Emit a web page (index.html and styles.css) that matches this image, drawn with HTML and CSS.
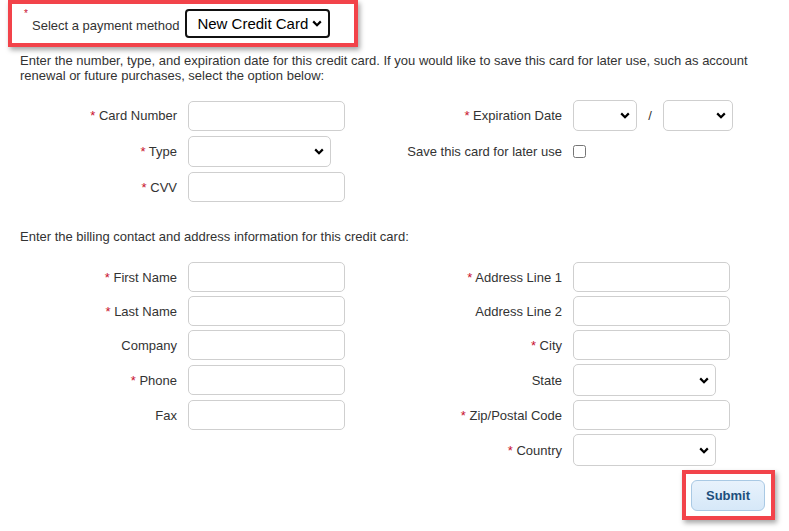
FILE: index.html
```html
<!DOCTYPE html>
<html>
<head>
<meta charset="utf-8">
<link rel="stylesheet" href="styles.css">
</head>
<body>
<div class="page">
  <div class="method-box">
    <span class="method-label"><sup class="req-sup">*</sup>Select a payment method</span>
    <select class="method-select"><option>New Credit Card</option></select>
  </div>

  <p class="intro">Enter the number, type, and expiration date for this credit card. If you would like to save this card for later use, such as account renewal or future purchases, select the option below:</p>

  <div class="form-grid card-grid">
    <label class="lbl"><span class="req">*</span> Card Number</label>
    <div class="fld"><input class="txt" type="text"></div>
    <label class="lbl"><span class="req">*</span> Expiration Date</label>
    <div class="fld exp">
      <select class="sel sel-month"></select>
      <span class="slash">/</span>
      <select class="sel sel-year"></select>
    </div>

    <label class="lbl"><span class="req">*</span> Type</label>
    <div class="fld"><select class="sel sel-mid"></select></div>
    <label class="lbl">Save this card for later use</label>
    <div class="fld"><input class="chk" type="checkbox"></div>

    <label class="lbl"><span class="req">*</span> CVV</label>
    <div class="fld"><input class="txt" type="text"></div>
    <div></div><div></div>
  </div>

  <p class="intro billing">Enter the billing contact and address information for this credit card:</p>

  <div class="form-grid bill-grid">
    <label class="lbl"><span class="req">*</span> First Name</label>
    <div class="fld"><input class="txt" type="text"></div>
    <label class="lbl"><span class="req">*</span> Address Line 1</label>
    <div class="fld"><input class="txt" type="text"></div>

    <label class="lbl"><span class="req">*</span> Last Name</label>
    <div class="fld"><input class="txt" type="text"></div>
    <label class="lbl">Address Line 2</label>
    <div class="fld"><input class="txt" type="text"></div>

    <label class="lbl">Company</label>
    <div class="fld"><input class="txt" type="text"></div>
    <label class="lbl"><span class="req">*</span> City</label>
    <div class="fld"><input class="txt" type="text"></div>

    <label class="lbl"><span class="req">*</span> Phone</label>
    <div class="fld"><input class="txt" type="text"></div>
    <label class="lbl">State</label>
    <div class="fld"><select class="sel sel-mid sel-tall"></select></div>

    <label class="lbl">Fax</label>
    <div class="fld"><input class="txt" type="text"></div>
    <label class="lbl"><span class="req">*</span> Zip/Postal Code</label>
    <div class="fld"><input class="txt" type="text"></div>

    <div></div><div></div>
    <label class="lbl"><span class="req">*</span> Country</label>
    <div class="fld"><select class="sel sel-mid sel-tall"></select></div>
  </div>

  <div class="submit-row">
    <div class="submit-box">
      <button class="submit" type="button">Submit</button>
    </div>
  </div>
</div>
</body>
</html>
```

FILE: styles.css
```css
* { box-sizing: border-box; }

html, body {
  margin: 0;
  padding: 0;
  background: #ffffff;
}

body {
  font-family: "Liberation Sans", Arial, sans-serif;
  font-size: 13px;
  color: #333333;
}

.page {
  width: 789px;
  height: 531px;
  overflow: hidden;
  padding: 0 20px 0 20px;
}

.method-box {
  margin-left: -12px;
  width: 350px;
  height: 47px;
  border: 4px solid #f2434a;
  box-shadow: 2px 3px 5px rgba(0, 0, 0, 0.35);
  display: flex;
  align-items: center;
  padding-left: 12px;
  padding-top: 1px;
}

.method-label {
  position: relative;
  padding-left: 8px;
  color: #333;
  margin-right: 6px;
  margin-top: 2px;
}

.req-sup {
  position: absolute;
  left: 0;
  top: -10px;
  color: #c8102e;
  font-size: 10px;
}

.method-select {
  width: 145px;
  height: 29px;
  border: 2px solid #111;
  border-radius: 4px;
  background: #fff url("data:image/svg+xml;utf8,<svg xmlns='http://www.w3.org/2000/svg' width='10' height='7' viewBox='0 0 10 7'><path d='M1.2 1.4 L5 5.2 L8.8 1.4' fill='none' stroke='%23000' stroke-width='2.2'/></svg>") no-repeat right 6px center;
  appearance: none;
  -webkit-appearance: none;
  font-family: "Liberation Sans", Arial, sans-serif;
  font-size: 15px;
  color: #000;
  padding: 0 0 0 10px;
  margin-top: -1px;
}

.intro {
  margin: 6px 0 0 0;
  line-height: 15px;
  color: #333;
}

.billing {
  margin-top: 27px;
}

.form-grid {
  display: grid;
  grid-template-columns: 168px 207px 178px auto;
  align-items: center;
}

.card-grid {
  margin-top: 17px;
  row-gap: 5px;
}

.bill-grid {
  margin-top: 18px;
  row-gap: 4px;
}

.lbl {
  text-align: right;
  color: #333;
  white-space: nowrap;
}

.card-grid .lbl:nth-child(4n+1),
.bill-grid .lbl:nth-child(4n+1) {
  padding-right: 11px;
}

.card-grid .lbl:nth-child(4n+3),
.bill-grid .lbl:nth-child(4n+3) {
  padding-right: 11px;
}

.req {
  color: #c8102e;
}

.fld {
  display: flex;
  align-items: center;
}

.txt {
  width: 157px;
  height: 30px;
  border: 1px solid #cfcfcf;
  border-radius: 5px;
  background: #fff;
  padding: 0 6px;
  font-family: "Liberation Sans", Arial, sans-serif;
  font-size: 13px;
}

.sel {
  height: 31px;
  border: 1px solid #cfcfcf;
  border-radius: 5px;
  background: #fff url("data:image/svg+xml;utf8,<svg xmlns='http://www.w3.org/2000/svg' width='10' height='7' viewBox='0 0 10 7'><path d='M1.2 1.4 L5 5.2 L8.8 1.4' fill='none' stroke='%23000' stroke-width='2.2'/></svg>") no-repeat right 6px center;
  appearance: none;
  -webkit-appearance: none;
  font-family: "Liberation Sans", Arial, sans-serif;
  font-size: 13px;
}

.sel-mid { width: 143px; }
.sel-tall { height: 32px; }
.sel-month { width: 64px; height: 31px; }
.sel-year { width: 70px; height: 31px; }

.slash {
  width: 26px;
  text-align: center;
  color: #333;
}

.chk {
  margin: 0;
  width: 13px;
  height: 13px;
}

.submit-row {
  display: flex;
  justify-content: flex-end;
  margin-top: 4px;
  margin-right: -6px;
}

.submit-box {
  width: 93px;
  height: 50px;
  border: 4px solid #f2434a;
  box-shadow: 2px 3px 5px rgba(0, 0, 0, 0.35);
  padding: 6px 0 0 5px;
}

.submit {
  width: 74px;
  height: 31px;
  border: 1px solid #a9c9e4;
  border-radius: 6px;
  background: linear-gradient(#e8f2fc, #d6e8f8);
  color: #1d4f7c;
  font-family: "Liberation Sans", Arial, sans-serif;
  font-size: 13px;
  font-weight: bold;
  padding: 0;
}
```
